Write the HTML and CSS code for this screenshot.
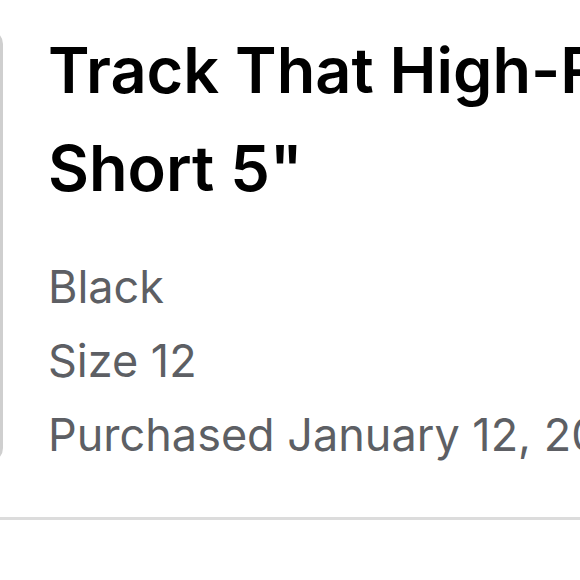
FILE: index.html
```html
<!DOCTYPE html>
<html>
<head>
<meta charset="utf-8">
<link rel="stylesheet" href="styles.css">
</head>
<body>
<div class="item">
  <div class="thumb"></div>
  <div class="info">
    <h1 class="title">Track That High-Rise Lined Short 5"</h1>
    <div class="meta">
      <div class="line">Black</div>
      <div class="line">Size 12</div>
      <div class="line">Purchased January 12, 2024</div>
    </div>
  </div>
</div>
<div class="divider"></div>
</body>
</html>
```
FILE: styles.css
```css
html, body {
  margin: 0;
  padding: 0;
  background: #ffffff;
  width: 580px;
  height: 580px;
  overflow: hidden;
}
body {
  font-family: Inter, "Liberation Sans", sans-serif;
}
.item {
  display: flex;
  height: 517px;
  align-items: flex-start;
  overflow: hidden;
}
.thumb {
  flex: 0 0 auto;
  width: 40px;
  margin-left: -37px;
  margin-top: 30px;
  height: 432px;
  border: 3px solid #cfcfcf;
  border-radius: 14px;
  box-sizing: border-box;
}
.info {
  flex: 0 0 auto;
  width: 900px;
  margin-left: 45px;
  padding-top: 21px;
}
.title {
  margin: 0;
  font-size: 63px;
  font-weight: 600;
  line-height: 98px;
  color: #000;
  width: 900px;
}
.meta {
  margin-top: 33px;
  color: #5d5f64;
  font-size: 45px;
  line-height: 74px;
}
.line {
  white-space: nowrap;
}
.divider {
  height: 3px;
  background: #dcdcdc;
}
```
